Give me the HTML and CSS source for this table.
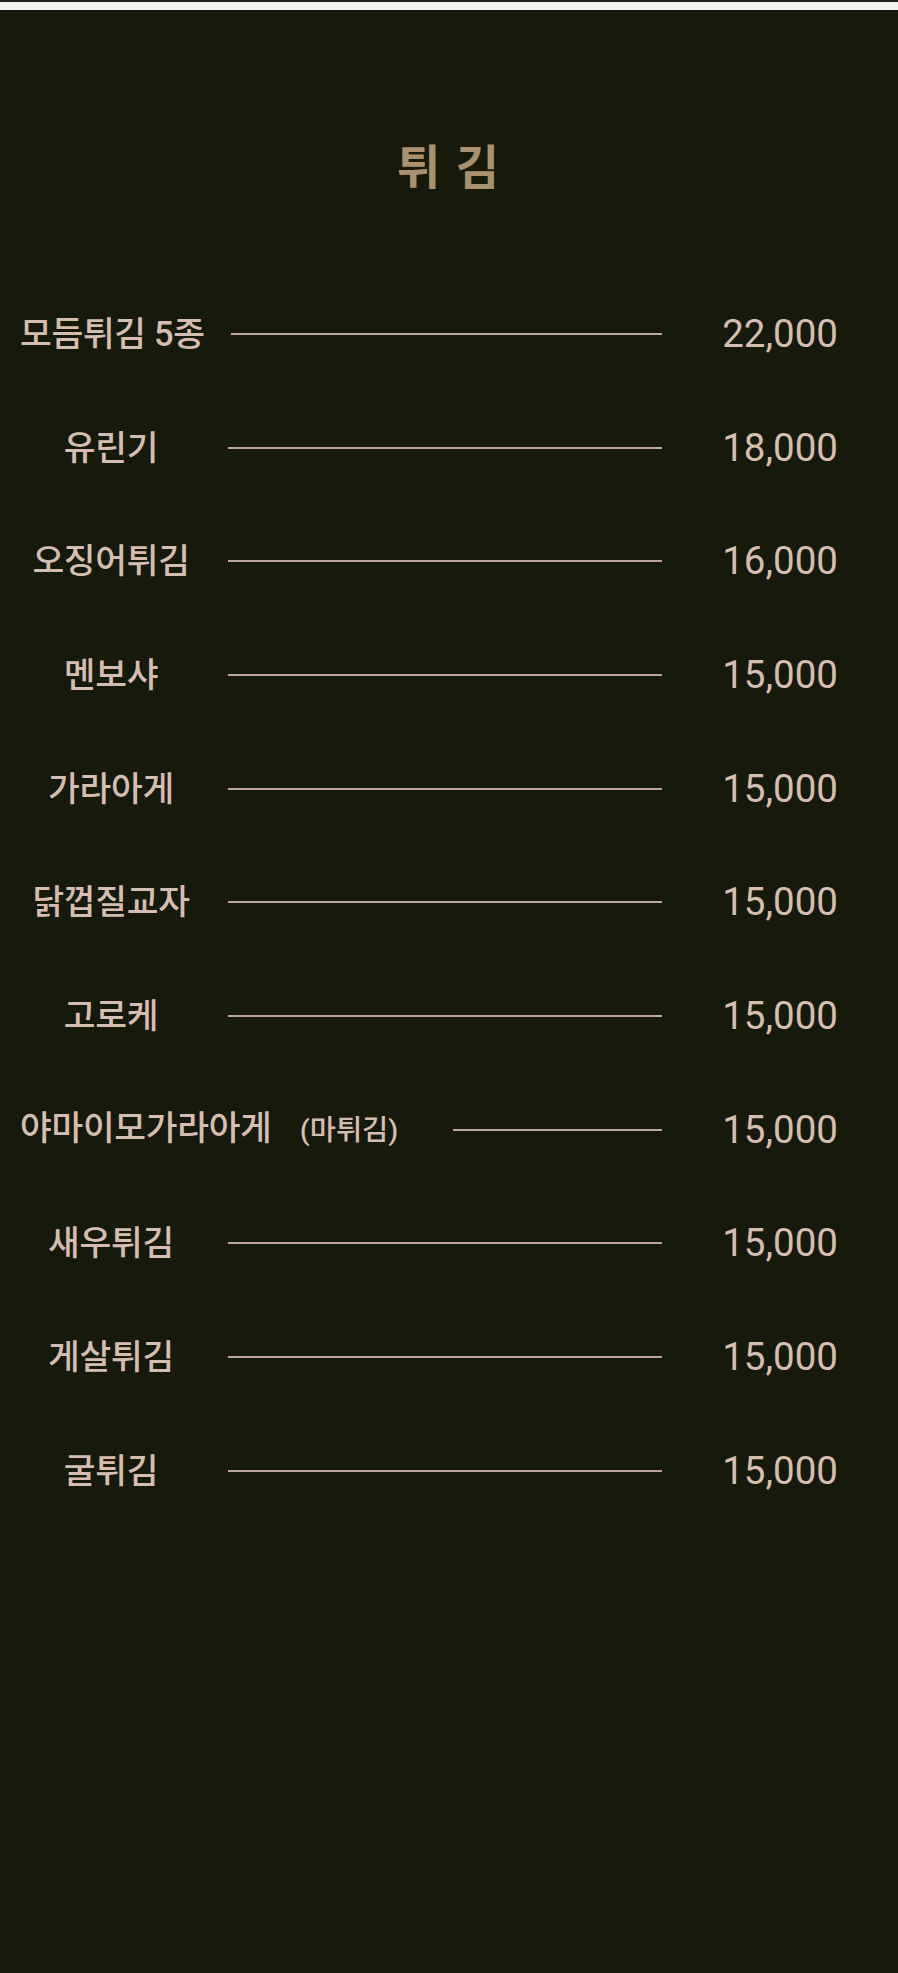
FILE: index.html
```html
<!DOCTYPE html>
<html lang="ko">
<head>
<meta charset="utf-8">
<title>튀김</title>
<link rel="stylesheet" href="styles.css">
</head>
<body>
<div class="topbar"></div>
<main class="menu">
  <h1 class="title">튀 김</h1>
  <ul class="list">
    <li class="row"><span class="name">모듬튀김 5종</span><span class="rule"></span><span class="price">22,000</span></li>
    <li class="row"><span class="name">유린기</span><span class="rule"></span><span class="price">18,000</span></li>
    <li class="row"><span class="name">오징어튀김</span><span class="rule"></span><span class="price">16,000</span></li>
    <li class="row"><span class="name">멘보샤</span><span class="rule"></span><span class="price">15,000</span></li>
    <li class="row"><span class="name">가라아게</span><span class="rule"></span><span class="price">15,000</span></li>
    <li class="row"><span class="name">닭껍질교자</span><span class="rule"></span><span class="price">15,000</span></li>
    <li class="row"><span class="name">고로케</span><span class="rule"></span><span class="price">15,000</span></li>
    <li class="row"><span class="name">야마이모가라아게 <small class="sub">(마튀김)</small></span><span class="rule"></span><span class="price">15,000</span></li>
    <li class="row"><span class="name">새우튀김</span><span class="rule"></span><span class="price">15,000</span></li>
    <li class="row"><span class="name">게살튀김</span><span class="rule"></span><span class="price">15,000</span></li>
    <li class="row"><span class="name">굴튀김</span><span class="rule"></span><span class="price">15,000</span></li>
  </ul>
</main>
</body>
</html>
```
FILE: styles.css
```css
html, body {
  margin: 0;
  padding: 0;
  background: #17190a;
}
body {
  min-height: 1973px;
  font-family: Roboto, "Noto Sans CJK KR", sans-serif;
  color: #d6bdb2;
}
.topbar {
  height: 8px;
  background: #f2f3ee;
  border-top: 2px solid #1c1c1a;
}
.menu {
  display: flex;
  flex-direction: column;
}
.title {
  margin: 128px 0 0;
  height: 60px;
  line-height: 60px;
  text-align: center;
  font-size: 47px;
  font-weight: 700;
  color: #a8916f;
  letter-spacing: 2px;
}
.list {
  list-style: none;
  margin: 79px 0 0;
  padding: 0;
}
.row {
  display: flex;
  align-items: center;
  height: 113.7px;
}
.name {
  flex: 0 0 auto;
  min-width: 182px;
  margin-left: 20px;
  text-align: center;
  font-size: 34.5px;
  font-weight: 500;
  line-height: 40px;
  white-space: nowrap;
  letter-spacing: -0.3px;
}
.sub {
  display: inline-block;
  font-size: 28.5px;
  font-weight: 500;
  margin: 0 29px 0 20px;
  letter-spacing: 0;
}
.rule {
  flex: 1 1 auto;
  height: 2px;
  margin: 0 60px 0 26px;
  background: #bfa69b;
}
.price {
  flex: 0 0 auto;
  width: 116px;
  margin-right: 60px;
  text-align: right;
  font-size: 38.5px;
  line-height: 40px;
}
```
